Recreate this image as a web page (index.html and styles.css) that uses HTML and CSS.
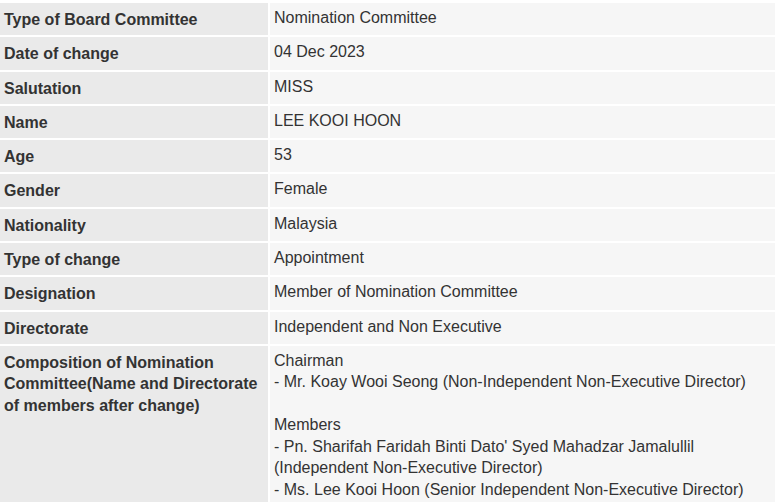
FILE: index.html
```html
<!DOCTYPE html>
<html>
<head>
<meta charset="utf-8">
<link rel="stylesheet" href="styles.css">
</head>
<body>
<div class="info">
  <div class="label">Type of Board Committee</div><div class="value">Nomination Committee</div>
  <div class="label">Date of change</div><div class="value">04 Dec 2023</div>
  <div class="label">Salutation</div><div class="value">MISS</div>
  <div class="label">Name</div><div class="value">LEE KOOI HOON</div>
  <div class="label">Age</div><div class="value">53</div>
  <div class="label">Gender</div><div class="value">Female</div>
  <div class="label">Nationality</div><div class="value">Malaysia</div>
  <div class="label">Type of change</div><div class="value">Appointment</div>
  <div class="label">Designation</div><div class="value">Member of Nomination Committee</div>
  <div class="label">Directorate</div><div class="value">Independent and Non Executive</div>
  <div class="label">Composition of Nomination Committee(Name and Directorate of members after change)</div>
  <div class="value">Chairman<br>- Mr. Koay Wooi Seong (Non-Independent Non-Executive Director)<br><br>Members<br>- Pn. Sharifah Faridah Binti Dato' Syed Mahadzar Jamalullil<br>(Independent Non-Executive Director)<br>- Ms. Lee Kooi Hoon (Senior Independent Non-Executive Director)</div>
</div>
</body>
</html>
```
FILE: styles.css
```css
html, body {
  margin: 0;
  padding: 0;
  background: #ffffff;
}
body {
  font-family: "Liberation Sans", Arial, sans-serif;
  font-size: 16px;
  color: #333333;
  overflow: hidden;
}
.info {
  display: grid;
  grid-template-columns: 268px 505px;
  gap: 2px;
  padding-top: 3px;
}
.label {
  background: #eaeaea;
  font-weight: bold;
  line-height: 21.5px;
  padding: 6px 4px 4.8px 4px;
}
.value {
  background: #f6f6f6;
  line-height: 21.5px;
  padding: 4px 4px 6.8px 4px;
}
```
